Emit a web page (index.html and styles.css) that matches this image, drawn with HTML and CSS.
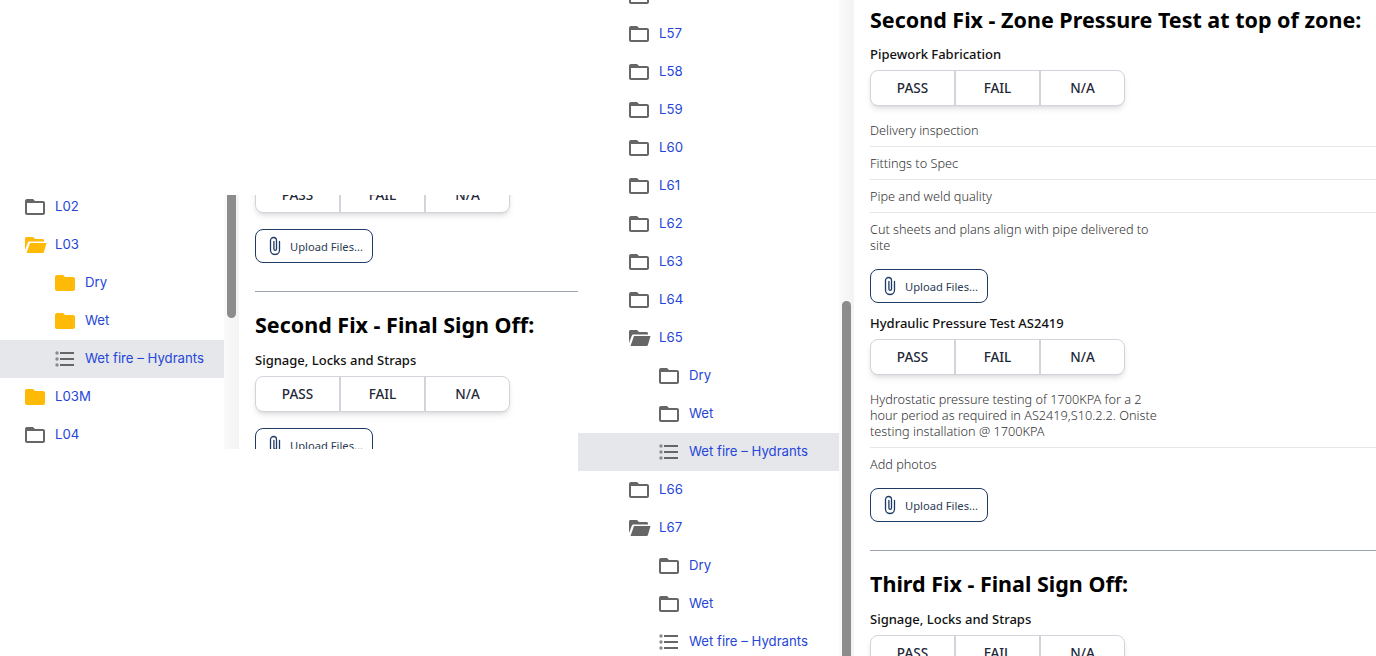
FILE: index.html
```html
<!DOCTYPE html>
<html lang="en">
<head>
    <meta charset="UTF-8">
    <meta name="viewport" content="width=device-width, initial-scale=1.0">
    <title>Inspection checklist</title>
    <link rel="stylesheet" href="styles.css">
</head>
<body>
    <svg class="sprites" xmlns="http://www.w3.org/2000/svg">
        <symbol id="folder" viewBox="0 0 24 24"><path d="M20 6h-8l-2-2H4c-1.1 0-1.99.9-1.99 2L2 18c0 1.1.9 2 2 2h16c1.1 0 2-.9 2-2V8c0-1.1-.9-2-2-2zm0 12H4V8h16v10z"/></symbol>
        <symbol id="folder-fill" viewBox="0 0 24 24"><path d="M10 4H4c-1.1 0-1.99.9-1.99 2L2 18c0 1.1.9 2 2 2h16c1.1 0 2-.9 2-2V8c0-1.1-.9-2-2-2h-8l-2-2z"/></symbol>
        <symbol id="folder-open" viewBox="0 0 24 24"><path d="M3.5 4H10l2 2h7.5c.8 0 1.5.7 1.5 1.5V8.500H6.500c-.8 0-1.400.5-1.700 1.200L2 17V5.500C2 4.700 2.700 4 3.500 4z"/><path d="M7 10h16.500L21 18.700c-.2.8-.9 1.300-1.700 1.300H3.500z"/></symbol>
        <symbol id="list" viewBox="0 0 24 24"><circle cx="4" cy="6" r="1.700" fill="#8a8a8a"/><circle cx="4" cy="12" r="1.700" fill="#8a8a8a"/><circle cx="4" cy="18" r="1.700" fill="#8a8a8a"/><path d="M7 5h14v2H7zM7 11h14v2H7zM7 17h14v2H7z"/></symbol>
        <symbol id="clip" viewBox="0 0 12 20"><path fill="none" stroke="currentColor" stroke-width="1.300" stroke-linecap="round" d="M10.500 5.500V14a4.500 4.500 0 0 1-9 0V4.500a3 3 0 0 1 6 0V13a1.300 1.300 0 0 1-2.600 0V5.500"/></symbol>
    </svg>

    <!-- left window, scrolled near the top of the tree -->
    <div class="pane pane-small">
        <ul class="tree tree-small">
            <li class="row"><svg class="icon"><use href="#folder"/></svg><a>L02</a></li>
            <li class="row"><svg class="icon yellow"><use href="#folder-open"/></svg><a>L03</a></li>
            <li class="row child"><svg class="icon yellow"><use href="#folder-fill"/></svg><a>Dry</a></li>
            <li class="row child"><svg class="icon yellow"><use href="#folder-fill"/></svg><a>Wet</a></li>
            <li class="row child active"><svg class="icon"><use href="#list"/></svg><a>Wet fire – Hydrants</a></li>
            <li class="row"><svg class="icon yellow"><use href="#folder-fill"/></svg><a>L03M</a></li>
            <li class="row"><svg class="icon"><use href="#folder"/></svg><a>L04</a></li>
        </ul>
        <div class="track"><div class="thumb thumb-small"></div></div>
        <div class="main main-small">
            <div class="btn-group">
                <button class="btn">PASS</button><button class="btn">FAIL</button><button class="btn">N/A</button>
            </div>
            <button class="upload"><svg class="clip"><use href="#clip"/></svg>Upload Files...</button>
            <hr class="divider">
            <h2 class="fix-title">Second Fix - Final Sign Off:</h2>
            <h3 class="group-title">Signage, Locks and Straps</h3>
            <div class="btn-group">
                <button class="btn">PASS</button><button class="btn">FAIL</button><button class="btn">N/A</button>
            </div>
            <button class="upload"><svg class="clip"><use href="#clip"/></svg>Upload Files...</button>
        </div>
    </div>

    <!-- right window, scrolled further down -->
    <div class="pane pane-big">
        <ul class="tree tree-big">
            <li class="row"><svg class="icon"><use href="#folder"/></svg><a>L56</a></li>
            <li class="row"><svg class="icon"><use href="#folder"/></svg><a>L57</a></li>
            <li class="row"><svg class="icon"><use href="#folder"/></svg><a>L58</a></li>
            <li class="row"><svg class="icon"><use href="#folder"/></svg><a>L59</a></li>
            <li class="row"><svg class="icon"><use href="#folder"/></svg><a>L60</a></li>
            <li class="row"><svg class="icon"><use href="#folder"/></svg><a>L61</a></li>
            <li class="row"><svg class="icon"><use href="#folder"/></svg><a>L62</a></li>
            <li class="row"><svg class="icon"><use href="#folder"/></svg><a>L63</a></li>
            <li class="row"><svg class="icon"><use href="#folder"/></svg><a>L64</a></li>
            <li class="row"><svg class="icon"><use href="#folder-open"/></svg><a>L65</a></li>
            <li class="row child"><svg class="icon"><use href="#folder"/></svg><a>Dry</a></li>
            <li class="row child"><svg class="icon"><use href="#folder"/></svg><a>Wet</a></li>
            <li class="row child active"><svg class="icon"><use href="#list"/></svg><a>Wet fire – Hydrants</a></li>
            <li class="row"><svg class="icon"><use href="#folder"/></svg><a>L66</a></li>
            <li class="row"><svg class="icon"><use href="#folder-open"/></svg><a>L67</a></li>
            <li class="row child"><svg class="icon"><use href="#folder"/></svg><a>Dry</a></li>
            <li class="row child"><svg class="icon"><use href="#folder"/></svg><a>Wet</a></li>
            <li class="row child"><svg class="icon"><use href="#list"/></svg><a>Wet fire – Hydrants</a></li>
        </ul>
        <div class="track"><div class="thumb thumb-big"></div></div>
        <div class="main main-big">
            <h2 class="fix-title">Second Fix - Zone Pressure Test at top of zone:</h2>
            <h3 class="group-title">Pipework Fabrication</h3>
            <div class="btn-group">
                <button class="btn">PASS</button><button class="btn">FAIL</button><button class="btn">N/A</button>
            </div>
            <ul class="checks">
                <li><span>Delivery inspection</span></li>
                <li><span>Fittings to Spec</span></li>
                <li><span>Pipe and weld quality</span></li>
                <li><span>Cut sheets and plans align with pipe delivered to site</span></li>
            </ul>
            <button class="upload"><svg class="clip"><use href="#clip"/></svg>Upload Files...</button>
            <h3 class="group-title group-next">Hydraulic Pressure Test AS2419</h3>
            <div class="btn-group">
                <button class="btn">PASS</button><button class="btn">FAIL</button><button class="btn">N/A</button>
            </div>
            <ul class="checks">
                <li><span>Hydrostatic pressure testing of 1700KPA for a 2 hour period as required in AS2419,S10.2.2. Oniste testing installation @ 1700KPA</span></li>
                <li><span>Add photos</span></li>
            </ul>
            <button class="upload"><svg class="clip"><use href="#clip"/></svg>Upload Files...</button>
            <hr class="divider">
            <h2 class="fix-title">Third Fix - Final Sign Off:</h2>
            <h3 class="group-title">Signage, Locks and Straps</h3>
            <div class="btn-group">
                <button class="btn">PASS</button><button class="btn">FAIL</button><button class="btn">N/A</button>
            </div>
        </div>
    </div>
</body>
</html>
```

FILE: styles.css
```css
html, body {
    margin: 0;
    height: 100%;
    overflow: hidden;
    background: #fff;
}
body {
    display: flex;
    align-items: flex-start;
    font-family: "Noto Sans", "Open Sans", sans-serif;
    color: #111;
}
.sprites {
    display: none;
}

.pane {
    display: flex;
    overflow: hidden;
}
.pane-small {
    width: 578px;
    height: 254px;
    margin-top: 195px;
}
.pane-big {
    width: 798px;
    height: 656px;
}

/* tree */
.tree {
    list-style: none;
    margin: 0;
    padding: 0;
    flex: none;
    font-family: Inter, sans-serif;
    font-size: 13.200px;
}
.tree-small {
    width: 224px;
    margin-top: -7px;
    --indent: 23px;
}
.tree-big {
    width: 261px;
    margin-top: -23px;
    --indent: 49px;
}
.row {
    display: flex;
    align-items: center;
    gap: 8px;
    height: 38px;
    padding-left: var(--indent);
}
.row.child {
    padding-left: calc(var(--indent) + 30px);
}
.row.active {
    background: #e5e7eb;
}
.row a {
    padding-bottom: 2px;
    color: #2546d8;
}
.icon {
    width: 24px;
    height: 24px;
    flex: none;
    fill: #666;
}
.icon.yellow {
    fill: #ffb907;
}

/* scrollbar */
.track {
    width: 15px;
    flex: none;
    height: 100%;
    padding: 0 3px;
    box-sizing: border-box;
    background: linear-gradient(to right, #fafafa, #f3f3f3);
}
.thumb {
    background: #8c8c8c;
    border-radius: 5px;
}
.thumb-small {
    height: 123px;
    border-radius: 0 0 5px 5px;
}
.thumb-big {
    height: 400px;
    margin-top: 301px;
}

/* checklist */
.main {
    flex: 1;
    min-width: 0;
    padding-left: 16px;
    overflow: hidden;
}
.main-small {
    margin-top: -18px;
}
.main-big {
    padding-top: 6px;
}
.fix-title {
    margin: 0 0 10px;
    font-size: 21.500px;
    line-height: 28px;
    font-weight: 700;
    color: #000;
    white-space: nowrap;
}
.divider + .fix-title {
    margin-bottom: 11px;
}
.group-title {
    margin: 0 0 6px;
    font-size: 13px;
    line-height: 20px;
    font-weight: 550;
}
.group-next {
    margin-top: 10px;
}
.btn-group {
    display: flex;
    width: 255px;
    height: 36px;
    box-sizing: border-box;
    border: 1px solid #d1d5db;
    border-radius: 8px;
    background: #fff;
    box-shadow: 0 4px 6px -1px rgba(0, 0, 0, .1), 0 2px 4px -2px rgba(0, 0, 0, .1);
}
.btn {
    flex: 1;
    border: 0;
    border-right: 2px solid #d1d5db;
    background: none;
    padding: 0;
    font-family: inherit;
    font-size: 13.500px;
    font-weight: 550;
    color: #1f2937;
}
.btn:last-child {
    border-right: 0;
}
.checks {
    list-style: none;
    margin: 8px 0;
    padding: 0;
    font-size: 12.700px;
    line-height: 16px;
    font-weight: 300;
    color: #333;
}
.checks li {
    padding: 8px 0;
    border-bottom: 1px solid #e5e7eb;
}
.checks li span {
    display: block;
    max-width: 290px;
}
.checks li:last-child {
    border-bottom: 0;
}
.upload {
    display: flex;
    align-items: center;
    gap: 9px;
    width: 118px;
    height: 34px;
    box-sizing: border-box;
    padding: 0 0 0 13px;
    border: 1px solid #1e3a66;
    border-radius: 8px;
    background: #fff;
    font-family: inherit;
    font-size: 11.200px;
    color: #2b3a55;
}
.btn-group + .upload {
    margin-top: 16px;
}
.clip {
    width: 12px;
    height: 20px;
    flex: none;
    color: #1e3a66;
}
.divider {
    margin: 28px 0 19px;
    border: 0;
    border-top: 1px solid #9ca3af;
}
```
